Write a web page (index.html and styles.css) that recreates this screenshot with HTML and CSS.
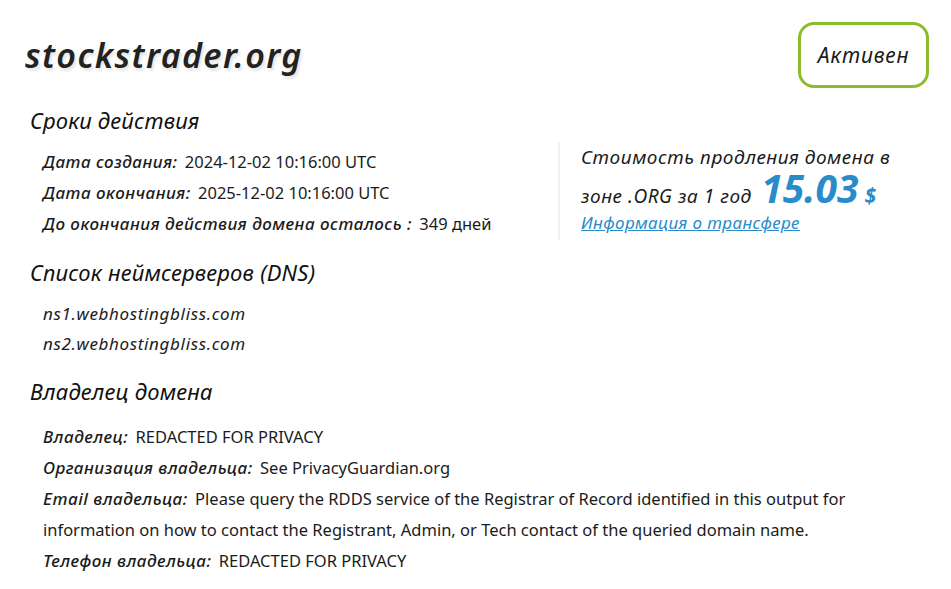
FILE: index.html
```html
<!DOCTYPE html>
<html lang="ru">
<head>
  <meta charset="UTF-8">
  <meta name="viewport" content="width=device-width, initial-scale=1.0">
  <title>stockstrader.org - Whois</title>
  <link rel="stylesheet" href="styles.css">
</head>
<body>
  <div class="page">
    <div class="head">
      <h1 class="domain">stockstrader.org</h1>
      <span class="status">Активен</span>
    </div>

    <h2>Сроки действия</h2>
    <div class="terms">
      <div class="list">
        <div class="row"><span class="label">Дата создания:</span> 2024-12-02 10:16:00 UTC</div>
        <div class="row"><span class="label">Дата окончания:</span> 2025-12-02 10:16:00 UTC</div>
        <div class="row"><span class="label">До окончания действия домена осталось :</span> 349 дней</div>
      </div>
      <div class="renew">
        <div class="renew-text">Стоимость продления домена в</div>
        <div class="renew-text price-line">зоне .ORG за 1 год <span class="price">15.03</span><span class="currency">$</span></div>
        <a class="transfer" href="#">Информация о трансфере</a>
      </div>
    </div>

    <h2>Список неймсерверов (DNS)</h2>
    <div class="ns">
      <div class="ns-row">ns1.webhostingbliss.com</div>
      <div class="ns-row">ns2.webhostingbliss.com</div>
    </div>

    <h2>Владелец домена</h2>
    <div class="list owner">
      <div class="row"><span class="label">Владелец:</span> REDACTED FOR PRIVACY</div>
      <div class="row"><span class="label">Организация владельца:</span> See PrivacyGuardian.org</div>
      <div class="row"><span class="label">Email владельца:</span> Please query the RDDS service of the Registrar of Record identified in this output for information on how to contact the Registrant, Admin, or Tech contact of the queried domain name.</div>
      <div class="row"><span class="label">Телефон владельца:</span> REDACTED FOR PRIVACY</div>
    </div>
  </div>
</body>
</html>
```

FILE: styles.css
```css
body {
  margin: 0;
  background: #fff;
  color: #1b1b1b;
  font-family: 'Noto Sans', sans-serif;
}
.page {
  padding: 22px 22px 0 25px;
}
.head {
  display: flex;
  justify-content: space-between;
  align-items: center;
  height: 66px;
}
.domain {
  margin: 0;
  font-size: 34px;
  letter-spacing: 1.4px;
  font-style: italic;
  font-weight: 600;
  color: #222;
  text-shadow: 2px 3px 3px rgba(0, 0, 0, 0.1);
}
.status {
  box-sizing: border-box;
  width: 131px;
  height: 66px;
  display: flex;
  align-items: center;
  justify-content: center;
  border: 3px solid #8dbb2d;
  border-radius: 16px;
  font-size: 21px;
  letter-spacing: 0.8px;
  font-style: italic;
}
h2 {
  margin: 17px 0 0 5px;
  font-size: 22px;
  letter-spacing: 0.2px;
  line-height: 30px;
  font-weight: 400;
  font-style: italic;
  color: #111;
}
.terms {
  display: flex;
  margin-top: 11px;
}
.list {
  padding-left: 18px;
  font-size: 16.5px;
  line-height: 31px;
}
.terms .list {
  width: 533px;
  box-sizing: border-box;
}
.label {
  font-size: 17px;
  letter-spacing: 0.5px;
  font-style: italic;
  font-weight: 500;
  margin-right: 3px;
}
.renew {
  border-left: 2px solid #f1f1f1;
  padding-left: 21px;
  margin-top: -4px;
  height: 98px;
  box-sizing: border-box;
}
.renew-text {
  font-size: 19px;
  letter-spacing: 0.55px;
  font-style: italic;
  line-height: 30px;
}
.price-line {
  height: 32px;
  line-height: 32px;
}
.price {
  font-size: 39px;
  letter-spacing: 0;
  font-weight: 700;
  color: #2a8bcb;
  margin-left: 4px;
}
.currency {
  font-size: 21px;
  font-weight: 700;
  font-style: italic;
  color: #2a8bcb;
  margin-left: 6px;
}
.transfer {
  display: block;
  margin-top: 4px;
  font-size: 17px;
  letter-spacing: 0.4px;
  font-style: italic;
  color: #2a8bcb;
  line-height: 30px;
}
.ns {
  margin-top: 12px;
  padding-left: 18px;
  font-size: 17px;
  letter-spacing: 0.65px;
  font-style: italic;
  line-height: 30px;
}
.owner {
  margin-top: 15px;
  padding-right: 50px;
}
```
